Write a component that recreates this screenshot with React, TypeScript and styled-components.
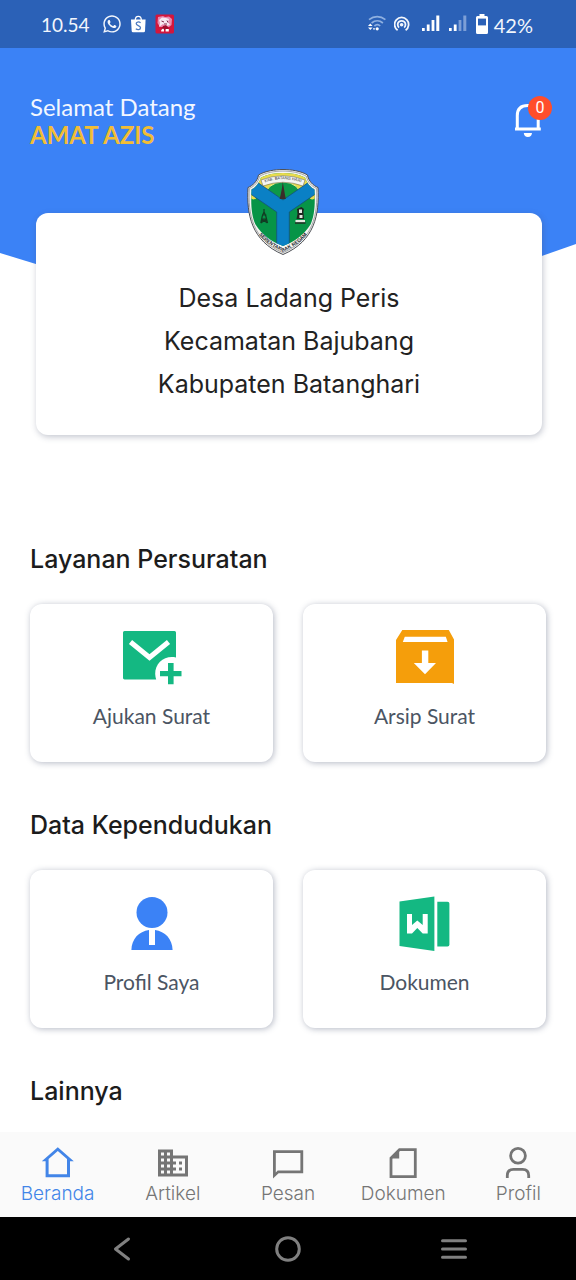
import React from 'react';
import styled, { createGlobalStyle } from 'styled-components';
import { FaWhatsapp } from 'react-icons/fa';
import { MdBusiness } from 'react-icons/md';

const GlobalStyle = createGlobalStyle`
  * { box-sizing: border-box; }
  body { margin: 0; background: #fff; }
  h1, h2, p { margin: 0; font-weight: 400; }
  a { color: inherit; text-decoration: none; }
  button { border: 0; padding: 0; background: none; color: inherit; cursor: pointer; }
  svg { display: block; }
`;

const Shell = styled.div`
  display: flex;
  flex-direction: column;
  height: 100vh;
  background: #fff;
  font-family: Inter, 'Liberation Sans', sans-serif;
`;

const StatusBar = styled.div`
  display: flex;
  flex: none;
  align-items: center;
  justify-content: space-between;
  height: 48px;
  padding: 2px 43px 0 41px;
  background: #2b61b7;
  color: #f2f6fc;
  font: 400 20px/24px Lato, sans-serif;
`;

const StatusGroup = styled.div<{ $gap: number }>`
  display: flex;
  align-items: center;
  gap: ${(p) => p.$gap}px;
`;

const Clock = styled.span`
  font-size: 19px;
`;

const StatusIcons = styled.span`
  display: flex;
  align-items: center;
  gap: 8px;
  padding-bottom: 2px;
`;

const Main = styled.main`
  flex: 1;
  min-height: 0;
  overflow-y: auto;
  scrollbar-width: none;
`;

const Hero = styled.header`
  display: flex;
  align-items: flex-start;
  justify-content: space-between;
  height: 295px;
  padding: 45px 24px 0 30px;
  background: #3b82f6;
  clip-path: polygon(0 0, 100% 0, 100% 196px, 51% 100%, 0 205px);
`;

const Greeting = styled.p`
  color: #f3f7ff;
  font: 400 24px/28px Lato, sans-serif;
`;

const UserName = styled.h1`
  color: #f2bd35;
  font: 700 24px/28px Lato, sans-serif;
`;

const BellButton = styled.button`
  position: relative;
  width: 38px;
  height: 44px;
`;

const Badge = styled.span`
  position: absolute;
  top: 3px;
  right: 0;
  width: 24px;
  height: 24px;
  border-radius: 50%;
  background: #ff4e2b;
  color: #fff;
  font: 400 16px/24px Roboto, sans-serif;
  text-align: center;
`;

const VillageCard = styled.section`
  position: relative;
  margin: -130px 34px 0 36px;
  padding: 64px 16px 29px;
  border-radius: 12px;
  background: #fff;
  box-shadow: 1px 2px 6px rgba(70, 80, 110, 0.32);
  color: #222;
  font-size: 25px;
  font-weight: 300;
  line-height: 43px;
  text-align: center;
`;

const CrestHolder = styled.div`
  position: absolute;
  top: -44px;
  left: 0;
  right: 0;
  display: flex;
  justify-content: center;
`;

const Services = styled.div`
  display: flex;
  flex-direction: column;
  gap: 48px;
  padding: 109px 30px 32px;
`;

const Section = styled.section`
  display: flex;
  flex-direction: column;
  gap: 30px;
`;

const SectionTitle = styled.h2`
  color: #1c1c1c;
  font-size: 25px;
  font-weight: 500;
  line-height: 30px;
`;

const CardGrid = styled.div`
  display: grid;
  grid-template-columns: 1fr 1fr;
  gap: 30px;
`;

const ServiceCard = styled.a`
  display: flex;
  flex-direction: column;
  align-items: center;
  gap: 14px;
  padding: 24px 12px 32px;
  border-radius: 12px;
  background: #fff;
  box-shadow: 1px 1px 6px rgba(70, 80, 110, 0.4);
  color: #4b5563;
  font: 400 21px/28px Lato, sans-serif;
`;

const TabBar = styled.nav`
  display: flex;
  flex: none;
  padding: 13px 0 10px;
  background: #fafafa;
`;

const Tab = styled.a<{ $active?: boolean }>`
  display: flex;
  flex: 1;
  flex-direction: column;
  align-items: center;
  color: ${(p) => (p.$active ? '#4285e8' : '#757575')};
  font-size: 19px;
  font-weight: 300;
  line-height: 26px;
`;

const SystemBar = styled.div`
  display: flex;
  flex: none;
  align-items: center;
  justify-content: space-around;
  height: 63px;
  padding: 0 39px;
  background: #000;
  color: #808080;
`;

const ShopBag = () => (
  <svg width="17" height="18" viewBox="0 0 17 18">
    <path d="M5.3 5 C5.3 0.2 11.3 0.2 11.3 5" fill="none" stroke="#fff" strokeWidth="1.3" />
    <path d="M1 4.6H15.6L15 16Q14.9 17.3 13.6 17.3H3Q1.8 17.3 1.7 16Z" fill="#fff" />
    <path d="M10.6 7.7C8.8 6.4 6.2 6.9 6.2 8.6C6.2 10.9 10.5 10.2 10.5 12.8C10.5 15 7.5 15.1 5.8 13.8" fill="none" stroke="#4c7ac0" strokeWidth="1.3" />
  </svg>
);

const GameIcon = () => (
  <svg width="20" height="20" viewBox="0 0 20 20">
    <rect x="0.5" y="0.5" width="18.5" height="19" rx="1.5" fill="#d4163c" />
    <path d="M3 3L8 2L10 3L14 2.5L17 5L16.5 11L14 13L5 13L2.5 9Z" fill="#e98bb0" />
    <path d="M4 6L7 3.5L11 4L14 5L13 8L15 11L11 12L8 10L4 13L5 9Z" fill="#f7e9f1" />
    <path d="M6.5 7L9 8M12 6.5L13 8.5M9 10H12" stroke="#7d2547" strokeWidth="1" />
    <path d="M8 12L11 11L13 13L14 16H6Z" fill="#a30d2c" />
    <path d="M6.2 16L8 14.5L9 15.5V17.5H6.2ZM10.6 15H13.8V17.5H10.6Z" fill="#fff" />
  </svg>
);

const WifiIcon = () => (
  <svg width="19" height="18" viewBox="0 0 19 18" fill="none">
    <g stroke="#8fb0e0" strokeWidth="1.7">
      <path d="M2 4.7C7 0.6 13.4 0.6 18.4 4.7" />
      <path d="M4.6 8C8 5.1 12.5 5.1 15.9 8" />
      <path d="M7.4 11C9.2 9.4 11.5 9.4 13.2 11" />
    </g>
    <path d="M1 11L3.3 8.4L5.6 11ZM1 12.4L3.3 15L5.6 12.4Z" fill="#fff" />
    <circle cx="10.2" cy="13.8" r="1.6" fill="#fff" />
    <circle cx="7" cy="13.8" r="0.9" fill="#fff" />
  </svg>
);

const HotspotIcon = () => (
  <svg width="20" height="18" viewBox="0 0 20 18" fill="none" stroke="#f2f6fc" strokeWidth="1.8">
    <path d="M3.6 15.2A7 7 0 1 1 11.6 15.2" />
    <path d="M5 12.6A3.9 3.9 0 1 1 10.2 12.6" />
    <circle cx="7.6" cy="9.8" r="1.8" fill="#f2f6fc" stroke="none" />
  </svg>
);

const SignalIcon = ({ weak }: { weak?: boolean }) => (
  <svg width="19" height="18" viewBox="0 0 19 18" fill="#fff">
    <rect x="0" y="13" width="2.7" height="3" />
    <rect x="4.8" y="9.5" width="2.8" height="6.5" />
    <rect x="9.6" y="5" width="2.8" height="11" fill={weak ? '#7d9fd6' : '#fff'} />
    <rect x="14.3" y="0.5" width="3" height="15.5" fill={weak ? '#7d9fd6' : '#fff'} />
  </svg>
);

const BatteryIcon = () => (
  <svg width="12" height="20" viewBox="0 0 12 20">
    <path d="M3.5 0H8.5V2H10.5Q12 2 12 3.5V18.5Q12 20 10.5 20H1.5Q0 20 0 18.5V3.5Q0 2 1.5 2H3.5Z" fill="#fff" />
    <rect x="2" y="4.6" width="8" height="6.8" fill="#2b61b7" />
  </svg>
);

const BellIcon = () => (
  <svg width="38" height="44" viewBox="0 0 38 44">
    <path d="M3.3 36.5V22.5C3.3 15.5 7.5 12.5 13.8 12.5C20.2 12.5 24.2 15.5 24.2 22.5V36.5" fill="none" stroke="#fff" strokeWidth="3" />
    <path d="M1 34.6H26.8V37.6H1Z" fill="#fff" />
    <path d="M9.8 40H18Q17.6 44 13.9 44Q10.2 44 9.8 40Z" fill="#fff" />
  </svg>
);

const SHIELD =
  'M36 0.5C28 0.5 18 2 11.5 6C10.5 12 6 16.5 1 18.5C-0.5 45 4 72 36 85.5C68 72 72.5 45 71 18.5C66 16.5 61.5 12 60.5 6C54 2 44 0.5 36 0.5Z';

const Crest = () => (
  <svg width="84" height="87" viewBox="0 0 84 87" role="img" aria-label="Lambang Kabupaten Batang Hari">
    <defs>
      <clipPath id="field">
        <path d="M36 4C28 4 20 5.4 14 8.6C12.4 14 9 18 4.6 20.6C3.6 36 4.6 47 8.5 55.5C15 66 25 73 36 77C47 73 57 66 63.5 55.5C67.4 47 68.4 36 67.4 20.6C63 18 59.6 14 58 8.6C52 5.4 44 4 36 4Z" />
      </clipPath>
      <path id="motto" d="M6 56C13 70 24 77.6 36 82.6C48 77.6 59 70 66 56" />
      <path id="ribbon" d="M15 14.6Q36 6 57 14.6" />
    </defs>
    <path d={SHIELD} fill="#f5f5f2" stroke="#4d4f55" strokeWidth="1" />
    <path d={SHIELD} fill="none" stroke="#6c6e73" strokeWidth="0.6" transform="translate(1.4 1.6) scale(0.96)" />
    <g clipPath="url(#field)">
      <rect width="72" height="87" fill="#079447" />
      <path d="M0 0H72V18L36 34L0 18Z" fill="#e9dc4d" />
      <path d="M16 30Q20 13 36 13Q52 13 56 30L36 40Z" fill="#0d9848" stroke="#f5ee8b" strokeWidth="1" />
      <circle cx="6.5" cy="27.4" r="3" fill="#e9dc4d" />
      <circle cx="65.5" cy="27.4" r="3" fill="#e9dc4d" />
      <path d="M10 13L36 31L62 13L70 24L42.3 43V80H29.7V43L2 24Z" fill="#0a80c5" stroke="#17517b" strokeWidth="0.8" />
    </g>
    <path d="M14 11Q36 2.5 58 11L56 17Q36 9.5 16 17Z" fill="#f5f5f2" stroke="#5b5d55" strokeWidth="0.5" />
    <path d="M35.8 13L37 20L38 26L38.8 30H32.6L33.6 26L34.8 20Z" fill="#3b2d2a" />
    <path d="M17 40V43L15.3 47L13.8 54M17 43L18.8 47L20.5 54M14.3 50H20M15 46H19.4M13.8 54L19.6 50M20.5 54L14.5 50" fill="none" stroke="#123a22" strokeWidth="1.2" />
    <path d="M50 40L54.5 38L57 40L56.4 43L57 50H49.5L50.5 45Z" fill="#20251f" />
    <path d="M52 40.5H55V44H52ZM52.5 46H55.5V49H52.5ZM48.5 51H58V53.4H48.5Z" fill="#e4e9e2" />
    <path d="M48 54H58.5" stroke="#20251f" strokeWidth="1.4" />
    <text fill="#34363b" fontFamily="Liberation Sans, sans-serif" fontSize="4" textAnchor="middle">
      <textPath href="#ribbon" startOffset="50%">KAB. BATANG HARI</textPath>
    </text>
    <text fill="#24262b" fontFamily="Liberation Sans, sans-serif" fontSize="5" fontWeight="700" textAnchor="middle">
      <textPath href="#motto" startOffset="50%">SERENTAK BAK REGAM</textPath>
    </text>
  </svg>
);

const MailPlusIcon = () => (
  <svg width="60" height="60" viewBox="0 0 60 60">
    <path d="M2.5 3H52.5Q54 3 54 4.5V29.6C43 27 33 35 33.2 46Q33.3 49 34.2 51.4H2.5Q1 51.4 1 50V4.5Q1 3 2.5 3Z" fill="#14b882" />
    <path d="M8.5 14L27.5 29.5L46.5 14" fill="none" stroke="#fff" strokeWidth="5" />
    <path d="M46 35H51.6V42.9H59.5V48.3H51.6V56.3H46V48.3H38V42.9H46Z" fill="#14b882" />
  </svg>
);

const ArchiveIcon = () => (
  <svg width="60" height="60" viewBox="0 0 60 60">
    <path d="M7.3 2H53.8L59 11.5V56L57 55H1V12Z" fill="#f59e0b" />
    <path d="M9.8 8.7H50.8L52.6 14H7.8Z" fill="#fff" />
    <path d="M26.9 22.5H33.3V35H41L30 46.2L18.8 35H26.9Z" fill="#fff" />
  </svg>
);

const PersonIcon = () => (
  <svg width="60" height="60" viewBox="0 0 60 60">
    <circle cx="30" cy="18.5" r="15.5" fill="#3b82f6" />
    <path d="M9.4 56C9.6 45 17 37.3 27 36V51H33V36C43 37.3 50.4 45 50.6 56Z" fill="#3b82f6" />
  </svg>
);

const WordIcon = () => (
  <svg width="60" height="60" viewBox="0 0 60 60">
    <path d="M4.5 7.5L39.4 2.6V57L4.5 52Z" fill="#14b882" />
    <path d="M42.3 7.8H52.5Q54.4 7.8 54.4 9.8V50.5Q54.4 52.4 52.5 52.4H42.3Z" fill="#14b882" />
    <path d="M12 20H17V31L22.3 26.5L27.7 31V20H32.7V39.5H27.7L22.3 34L17 39.5H12Z" fill="#fff" />
  </svg>
);

const HomeIcon = () => (
  <svg width="36" height="36" viewBox="0 0 36 36">
    <path fillRule="evenodd" fill="currentColor" d="M17.8 2.2L33.8 16.2H30V32.2H5.6V16.2H1.8ZM17.8 6L8.6 14.1V29.3H27V14.1Z" />
  </svg>
);

const ChatIcon = () => (
  <svg width="36" height="36" viewBox="0 0 36 36">
    <path fillRule="evenodd" fill="currentColor" d="M3 5.2H33.2V28.2H8.6L3 33.4ZM5.8 8V27.4L7.7 25.4H30.4V8Z" />
  </svg>
);

const FileIcon = () => (
  <svg width="36" height="36" viewBox="0 0 36 36">
    <path d="M14.5 4.6H30.3V31.6H6V13.1Z" fill="none" stroke="currentColor" strokeWidth="2.8" />
    <path d="M14.2 4V13.4H5.5Z" fill="currentColor" />
  </svg>
);

const ProfileIcon = () => (
  <svg width="36" height="36" viewBox="0 0 36 36" fill="none" stroke="currentColor" strokeWidth="2.8">
    <circle cx="18" cy="10.7" r="7.4" />
    <path d="M7.3 33V30.5Q7.3 24.4 13.4 24.4H22.6Q28.7 24.4 28.7 30.5V33" />
  </svg>
);

const sections = [
  {
    title: 'Layanan Persuratan',
    items: [
      { label: 'Ajukan Surat', Icon: MailPlusIcon },
      { label: 'Arsip Surat', Icon: ArchiveIcon },
    ],
  },
  {
    title: 'Data Kependudukan',
    items: [
      { label: 'Profil Saya', Icon: PersonIcon },
      { label: 'Dokumen', Icon: WordIcon },
    ],
  },
];

const tabs = [
  { label: 'Beranda', icon: <HomeIcon />, active: true },
  { label: 'Artikel', icon: <MdBusiness size={36} /> },
  { label: 'Pesan', icon: <ChatIcon /> },
  { label: 'Dokumen', icon: <FileIcon /> },
  { label: 'Profil', icon: <ProfileIcon /> },
];

export default function App() {
  return (
    <Shell>
      <GlobalStyle />
      <StatusBar>
        <StatusGroup $gap={12}>
          <Clock>10.54</Clock>
          <StatusIcons>
            <FaWhatsapp size={20} />
            <ShopBag />
            <GameIcon />
          </StatusIcons>
        </StatusGroup>
        <StatusGroup $gap={6}>
          <StatusIcons>
            <WifiIcon />
            <HotspotIcon />
            <SignalIcon />
            <SignalIcon weak />
            <BatteryIcon />
          </StatusIcons>
          <span>42%</span>
        </StatusGroup>
      </StatusBar>

      <Main>
        <Hero>
          <div>
            <Greeting>Selamat Datang</Greeting>
            <UserName>AMAT AZIS</UserName>
          </div>
          <BellButton type="button" aria-label="Notifikasi">
            <BellIcon />
            <Badge>0</Badge>
          </BellButton>
        </Hero>

        <VillageCard>
          <CrestHolder>
            <Crest />
          </CrestHolder>
          <p>Desa Ladang Peris</p>
          <p>Kecamatan Bajubang</p>
          <p>Kabupaten Batanghari</p>
        </VillageCard>

        <Services>
          {sections.map(({ title, items }) => (
            <Section key={title}>
              <SectionTitle>{title}</SectionTitle>
              <CardGrid>
                {items.map(({ label, Icon }) => (
                  <ServiceCard href="#" key={label}>
                    <Icon />
                    {label}
                  </ServiceCard>
                ))}
              </CardGrid>
            </Section>
          ))}
          <Section>
            <SectionTitle>Lainnya</SectionTitle>
          </Section>
        </Services>
      </Main>

      <TabBar>
        {tabs.map(({ label, icon, active }) => (
          <Tab href="#" key={label} $active={active} aria-current={active ? 'page' : undefined}>
            {icon}
            {label}
          </Tab>
        ))}
      </TabBar>

      <SystemBar>
        <button type="button" aria-label="Kembali">
          <svg width="28" height="28" viewBox="0 0 28 28" fill="none" stroke="currentColor" strokeWidth="3" strokeLinecap="round" strokeLinejoin="round">
            <path d="M20.5 4L7.5 14L20.5 24" />
          </svg>
        </button>
        <button type="button" aria-label="Layar utama">
          <svg width="28" height="28" viewBox="0 0 28 28" fill="none" stroke="currentColor" strokeWidth="3">
            <circle cx="14" cy="14" r="11.3" />
          </svg>
        </button>
        <button type="button" aria-label="Aplikasi terbaru">
          <svg width="28" height="28" viewBox="0 0 28 28" fill="none" stroke="currentColor" strokeWidth="3" strokeLinecap="round">
            <path d="M2.5 5.8H25.5M2.5 14H25.5M2.5 22.3H25.5" />
          </svg>
        </button>
      </SystemBar>
    </Shell>
  );
}
